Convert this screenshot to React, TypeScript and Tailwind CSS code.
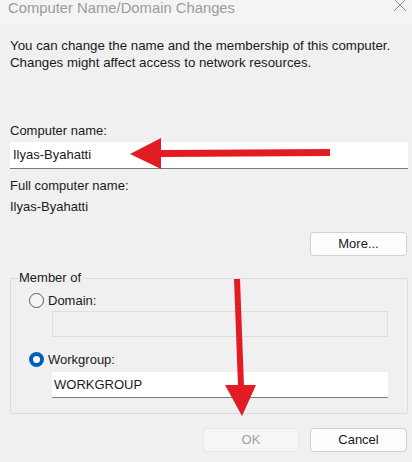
import React from "react";

const font = { fontFamily: '"Liberation Sans", Arial, sans-serif' };

function Radio({ checked }: { checked?: boolean }) {
  return checked ? (
    <span className="flex h-[15px] w-[15px] items-center justify-center rounded-full bg-[#005fb8]">
      <span className="h-[7px] w-[7px] rounded-full bg-white" />
    </span>
  ) : (
    <span className="h-[15px] w-[15px] rounded-full border border-[#5a5a5a] bg-[#f4f4f4]" />
  );
}

function Button({ label, disabled }: { label: string; disabled?: boolean }) {
  return (
    <div
      className={
        disabled
          ? "flex h-[24px] w-[96px] items-center justify-center rounded-[4px] border border-[#e6e6e6] bg-[#f6f6f6] text-[13px] text-[#a3a3a3]"
          : "flex h-[24px] w-[97px] items-center justify-center rounded-[4px] border border-[#d0d0d0] bg-[#fdfdfd] text-[13px] text-[#1a1a1a]"
      }
    >
      {label}
    </div>
  );
}

function Arrows() {
  return (
    <svg className="pointer-events-none absolute inset-0" width="412" height="462" viewBox="0 0 412 462">
      <polygon points="330,149 330,156 161,157 161,150" fill="#e31b23" />
      <polygon points="130,154 161,138 161,169" fill="#e31b23" />
      <polygon points="234,279 240,279 244,386 238,386" fill="#e31b23" />
      <polygon points="225,385 256,385 242,416" fill="#e31b23" />
    </svg>
  );
}

export default function App() {
  return (
    <div className="relative h-[462px] w-[412px] overflow-hidden bg-[#f0f0f0] text-[#1a1a1a]" style={font}>
      <div className="flex h-[24px] items-start justify-between bg-[#f4f4f4] pl-[8px] pr-[5px]">
        <span className="mt-[-2px] text-[14.8px] leading-[20px] text-[#9b9b9b]">Computer Name/Domain Changes</span>
        <svg width="14" height="14" viewBox="0 0 14 14" className="mt-[-1px]">
          <path d="M1 0 L13 12 M13 0 L1 12" stroke="#8a8a8a" strokeWidth="1" />
        </svg>
      </div>

      <div className="pl-[10px] pr-[4px] pt-[13px]">
        <p className="text-[13.3px] leading-[17px]">
          You can change the name and the membership of this computer.
          <br />
          Changes might affect access to network resources.
        </p>

        <div className="mt-[52px] text-[13px] leading-[16px]">Computer name:</div>
        <div className="mt-[3px] flex h-[27px] w-[398px] items-center border-b border-[#7a7a7a] bg-white pl-[3px] text-[13px]">
          Ilyas-Byahatti
        </div>
        <div className="mt-[9px] text-[13px] leading-[16px]">Full computer name:</div>
        <div className="mt-[5px] text-[13px] leading-[16px]">Ilyas-Byahatti</div>

        <div className="mt-[17px] flex justify-end pr-[1px]">
          <Button label="More..." />
        </div>

        <fieldset className="mt-[14px] h-[144px] w-[398px] rounded-[2px] border border-[#dcdcdc] pl-[7px] pt-[5px]">
          <legend className="px-[1px] text-[13px] leading-[16px]">Member of</legend>
          <div className="ml-[11px] flex items-center gap-[4px] text-[13px]">
            <Radio />
            <span>Domain:</span>
          </div>
          <div className="ml-[34px] mt-0 h-[26px] w-[336px] border border-[#dedede] bg-[#f0f0f0]" />
          <div className="ml-[11px] mt-[13px] flex items-center gap-[4px] text-[13px]">
            <Radio checked />
            <span>Workgroup:</span>
          </div>
          <div className="ml-[34px] mt-[3px] flex h-[26px] w-[336px] items-center border-b border-[#7a7a7a] bg-white pl-[2px] text-[13px]">
            WORKGROUP
          </div>
        </fieldset>

        <div className="mt-[14px] flex justify-end gap-[11px] pr-[1px]">
          <Button label="OK" disabled />
          <Button label="Cancel" />
        </div>
      </div>

      <Arrows />
    </div>
  );
}
